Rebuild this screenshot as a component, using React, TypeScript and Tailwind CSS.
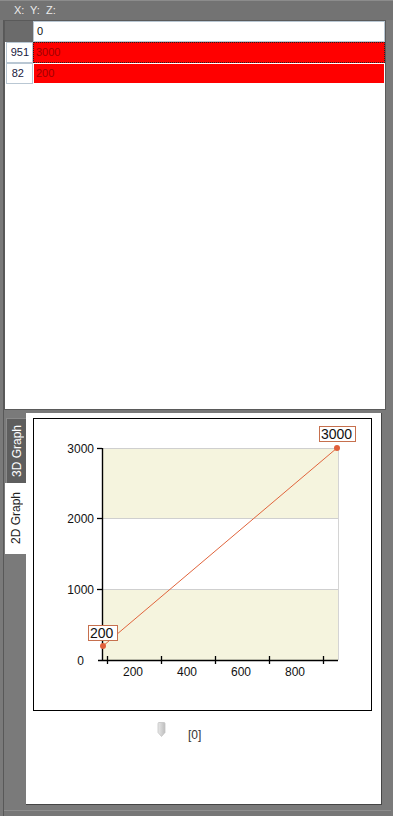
import React from "react";

const FONT = "'Liberation Sans', Arial, sans-serif";

function Chart() {
  const xTicks = [107, 161, 215, 269, 323];
  const xLabels = [
    { x: 133, t: "200" },
    { x: 187, t: "400" },
    { x: 241, t: "600" },
    { x: 295, t: "800" },
  ];
  const yLabels = [
    { y: 448, t: "3000" },
    { y: 518, t: "2000" },
    { y: 589, t: "1000" },
  ];
  return (
    <svg width="337" height="291" viewBox="0 0 337 291" fontFamily={FONT}>
      <g transform="translate(-34 -419)">
        <rect x="102" y="448" width="236" height="70" fill="#f5f4de" />
        <rect x="102" y="589" width="236" height="71" fill="#f5f4de" />
        {yLabels.map((l) => (
          <line key={l.t} x1="102" x2="338" y1={l.y + 0.5} y2={l.y + 0.5} stroke="#cfcfcf" strokeWidth="1" />
        ))}
        <line x1="338.5" x2="338.5" y1="448" y2="660" stroke="#d4d4d4" strokeWidth="1" />
        <line x1="102.5" x2="102.5" y1="448" y2="661" stroke="#000" strokeWidth="1.4" />
        {yLabels.map((l) => (
          <g key={l.t}>
            <line x1="97" x2="102" y1={l.y + 0.5} y2={l.y + 0.5} stroke="#000" strokeWidth="1.3" />
            <text x="94" y={l.y + 4.5} fontSize="12" textAnchor="end" fill="#111">
              {l.t}
            </text>
          </g>
        ))}
        <text x="84" y="664.5" fontSize="12" textAnchor="end" fill="#111">
          0
        </text>
        <line x1="98" x2="338" y1="660.5" y2="660.5" stroke="#000" strokeWidth="1.4" />
        {xTicks.map((x) => (
          <line key={x} x1={x + 0.5} x2={x + 0.5} y1="656" y2="664" stroke="#000" strokeWidth="1.3" />
        ))}
        {xLabels.map((l) => (
          <text key={l.t} x={l.x} y="676" fontSize="12" textAnchor="middle" fill="#111">
            {l.t}
          </text>
        ))}
        <line x1="103" y1="646" x2="337" y2="448" stroke="#e0643c" strokeWidth="1" />
        <circle cx="103" cy="646" r="3" fill="#e0603c" />
        <circle cx="337" cy="448" r="3" fill="#e0603c" />
        <rect x="88.5" y="625.5" width="29" height="15" fill="#fff" stroke="#c6704e" strokeWidth="1" />
        <text x="90" y="638" fontSize="14" fill="#111">
          200
        </text>
        <rect x="319.5" y="426.5" width="36" height="15" fill="#fff" stroke="#c6704e" strokeWidth="1" />
        <text x="321" y="439" fontSize="14" fill="#111">
          3000
        </text>
      </g>
    </svg>
  );
}

export default function App() {
  return (
    <div className="w-[393px] h-[816px] bg-[#7a7a7a] flex flex-col overflow-hidden font-['Liberation_Sans',Arial,sans-serif]">
      <div className="h-[20px] flex items-center pl-[14px] text-[11px] text-[#ececec] border-t border-[#8c8c8c] bg-[#737373]">
        <span className="w-[16px]">X:</span>
        <span className="w-[16px]">Y:</span>
        <span>Z:</span>
      </div>
      <div className="flex-1 flex flex-col ml-[3px] w-[388px] border-l border-[#585858]">
        <div className="w-[382px] h-[390px] bg-white border border-[#5a5a5a] flex flex-col text-[11px]">
          <div className="h-[21px] flex">
            <div className="w-[28px] bg-[#6b6b6b]" />
            <div className="flex-1 border border-[#b9c7d3] bg-white flex items-center pl-[3px] text-[#111]">0</div>
          </div>
          <div className="h-[21px] flex">
            <div className="w-[27px] ml-[1px] border border-[#b9c7d3] flex items-center justify-end pr-[3px] text-[#1a1a40]">951</div>
            <div className="flex-1 border border-dotted border-[#222] bg-[#ff0000] flex items-center pl-[2px] text-[#a00000]">3000</div>
          </div>
          <div className="h-[21px] flex">
            <div className="w-[27px] ml-[1px] border border-[#b9c7d3] flex items-center justify-end pr-[8px] text-[#1a1a40]">82</div>
            <div className="flex-1 border border-white bg-[#ff0000] flex items-center pl-[2px] text-[#a00000]">200</div>
          </div>
        </div>
        <div className="mt-[3px] h-[392px] flex">
          <div className="w-[22px] pt-[5px] flex flex-col">
            <div className="ml-[2px] w-[20px] h-[65px] bg-[#5e5e5e] border-t border-l border-[#8a8a8a] flex items-center justify-center">
              <span className="[writing-mode:vertical-rl] rotate-180 text-[12px] text-white">3D Graph</span>
            </div>
            <div className="ml-[1px] w-[21px] h-[71px] bg-white flex items-center justify-center">
              <span className="[writing-mode:vertical-rl] rotate-180 text-[12px] text-[#222]">2D Graph</span>
            </div>
          </div>
          <div className="w-[356px] h-[392px] bg-white border-r border-b border-[#454545] pl-[7px] pt-[5px] flex flex-col">
            <div className="w-[339px] h-[293px] border border-black">
              <Chart />
            </div>
            <div className="mt-[11px] ml-[124px] flex items-start">
              <svg width="9" height="15" viewBox="0 0 9 15">
                <defs>
                  <linearGradient id="th" x1="0" x2="1" y1="0" y2="0">
                    <stop offset="0" stopColor="#e8e8e8" />
                    <stop offset="1" stopColor="#bdbdbd" />
                  </linearGradient>
                </defs>
                <path d="M1 1.5 Q1 0.5 2 0.5 H7 Q8 0.5 8 1.5 V10.5 L4.5 14.5 L1 10.5 Z" fill="url(#th)" stroke="#c4c4c4" strokeWidth="0.8" />
              </svg>
              <span className="ml-[22px] mt-[4px] text-[12px] text-[#333]">[0]</span>
            </div>
          </div>
        </div>
        <div className="mt-[5px] h-[6px] border-t border-[#8e8e8e] bg-[#777]" />
      </div>
    </div>
  );
}
